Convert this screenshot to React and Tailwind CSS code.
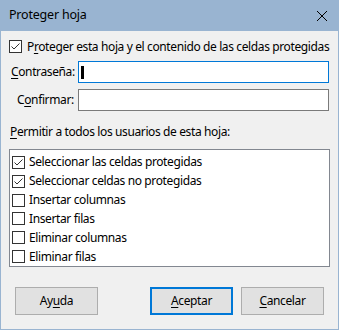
import React from 'react';

const font = { fontFamily: '"Noto Sans", "Open Sans", sans-serif' };

function Check({ checked }) {
    return (
        <span className="relative inline-block w-[13px] h-[13px] border border-[#333] bg-white shrink-0">
            {checked && (
                <svg width="11" height="11" viewBox="0 0 11 11" className="absolute left-0 top-0">
                    <path d="M1.5 5.5 L4 8 L9.5 2.5" fill="none" stroke="#333" strokeWidth="1" />
                </svg>
            )}
        </span>
    );
}

function U({ children }) {
    return <span className="underline underline-offset-2">{children}</span>;
}

const permisos = [
    { label: 'Seleccionar las celdas protegidas', checked: true },
    { label: 'Seleccionar celdas no protegidas', checked: true },
    { label: 'Insertar columnas', checked: false },
    { label: 'Insertar filas', checked: false },
    { label: 'Eliminar columnas', checked: false },
    { label: 'Eliminar filas', checked: false },
];

export default function App() {
    return (
        <div className="w-[339px] h-[330px] bg-[#f0f0f0] border-x border-b border-[#99b4d1] flex flex-col text-[12px] tracking-[-0.38px] text-black leading-none" style={font}>
            <div className="h-[31px] bg-[#99b4d1] flex items-center justify-between pl-[8px] pr-[10px] shrink-0">
                <span className="text-[12.5px] tracking-[-0.2px]">Proteger hoja</span>
                <svg width="12" height="12" viewBox="0 0 12 12">
                    <path d="M1 1 L11 11 M11 1 L1 11" stroke="#000" strokeWidth="1" />
                </svg>
            </div>

            <div className="flex flex-col px-[8px]">
                <label className="flex items-center gap-[5px] mt-[9px] h-[13px]">
                    <Check checked />
                    <span className="whitespace-nowrap">P<U>r</U>oteger esta hoja y el contenido de las celdas protegidas</span>
                </label>

                <div className="flex items-center mt-[8px] h-[22px]">
                    <span className="w-[69px] pl-[2px] whitespace-nowrap"><U>C</U>ontraseña:</span>
                    <div className="flex-1 h-[22px] mr-[1px] bg-white border border-[#0078d7] flex items-center pl-[2px]">
                        <span className="w-[3px] h-[13px] bg-black" />
                    </div>
                </div>

                <div className="flex items-center mt-[6px] h-[22px]">
                    <span className="w-[69px] pl-[8px] whitespace-nowrap">C<U>o</U>nfirmar:</span>
                    <div className="flex-1 h-[22px] mr-[1px] bg-white border border-[#7a7a7a]" />
                </div>

                <div className="mt-[14px] pl-[1px] h-[14px] flex items-center whitespace-nowrap">
                    <span><U>P</U>ermitir a todos los usuarios de esta hoja:</span>
                </div>

                <div className="mt-[10px] h-[118px] bg-white border border-[#828790] flex flex-col pt-[3px] pl-[2px]">
                    {permisos.map(p => (
                        <div key={p.label} className="flex items-center gap-[4px] h-[19.4px]">
                            <Check checked={p.checked} />
                            <span className="whitespace-nowrap">{p.label}</span>
                        </div>
                    ))}
                </div>

                <div className="flex mt-[20px] pl-[6px] pr-[6px]">
                    <button className="w-[83px] h-[28px] bg-[#e1e1e1] border border-[#adadad]">Ay<U>u</U>da</button>
                    <button className="ml-auto w-[83px] h-[28px] bg-[#e1e1e1] border-2 border-[#0078d7]"><U>A</U>ceptar</button>
                    <button className="ml-[8px] w-[83px] h-[28px] bg-[#e1e1e1] border border-[#adadad]"><U>C</U>ancelar</button>
                </div>
            </div>
        </div>
    );
}
